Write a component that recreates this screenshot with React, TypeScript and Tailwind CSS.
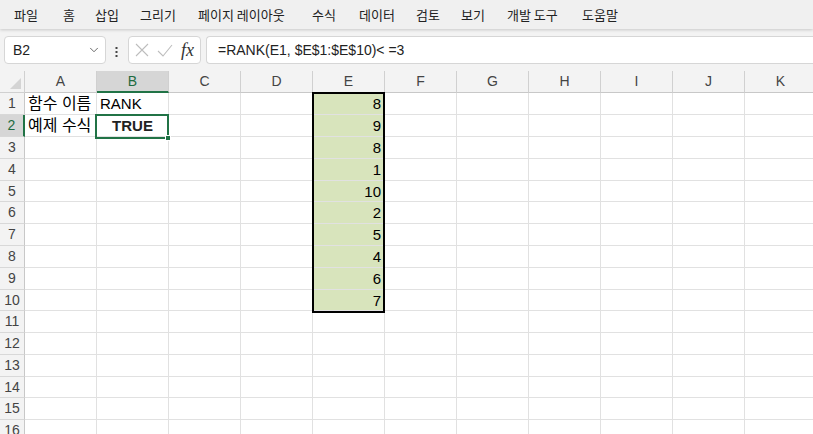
import { ChevronDown } from "lucide-react";

// tab starts taken from the ribbon: each tab box is a fixed width
const menus: [string, string][] = [
  ["파일", "w-[49px]"],
  ["홈", "w-[32px]"],
  ["삽입", "w-[45px]"],
  ["그리기", "w-[58px]"],
  ["페이지 레이아웃", "w-[114px]"],
  ["수식", "w-[47px]"],
  ["데이터", "w-[57px]"],
  ["검토", "w-[45px]"],
  ["보기", "w-[46px]"],
  ["개발 도구", "w-[75px]"],
  ["도움말", "w-[60px]"],
];
const cols = ["A", "B", "C", "D", "E", "F", "G", "H", "I", "J", "K"];

// Excel rows are ~21.7px, so mix 22 and 21
const rowHeights = [
  "h-[22px]", "h-[22px]", "h-[22px]", "h-[22px]", "h-[21px]",
  "h-[22px]", "h-[22px]", "h-[22px]", "h-[22px]", "h-[21px]",
  "h-[22px]", "h-[22px]", "h-[22px]", "h-[21px]", "h-[22px]", "h-[22px]",
];

const eValues = [8, 9, 8, 1, 10, 2, 5, 4, 6, 7];

const uiFont = "font-['Noto_Sans_CJK_KR','Noto_Sans',sans-serif]";
const cellFont = "font-['Liberation_Sans','Noto_Sans_CJK_KR',sans-serif]";

function Cell({ row, col }: { row: number; col: number }) {
  const base = `relative border-r border-b border-[#e1e1e1] overflow-visible whitespace-nowrap text-[15px] leading-none text-black flex items-center ${cellFont}`;
  const isE = col === 4 && row < 10;

  let content: React.ReactNode = null;
  if (col === 0 && row === 0) content = <span className="pl-[3px] text-[16px]">함수 이름</span>;
  if (col === 0 && row === 1) content = <span className="pl-[3px] text-[16px]">예제 수식</span>;
  if (col === 1 && row === 0) content = <span className="pl-[3px]">RANK</span>;
  if (col === 1 && row === 1) content = <span className="w-full text-center font-bold text-[#222]">TRUE</span>;
  if (isE) content = <span className="w-full pr-[3px] text-right">{eValues[row]}</span>;

  return (
    <div className={`${base} ${isE ? "bg-[#d8e4bc]" : "bg-white"}`}>
      {content}
      {col === 1 && row === 1 && (
        <div className="pointer-events-none absolute -left-[2px] -top-[1px] z-10 h-[25px] w-[74px] border-2 border-[#217346]">
          <div className="absolute -bottom-[4px] -right-[4px] h-[6px] w-[6px] border border-white bg-[#217346]" />
        </div>
      )}
    </div>
  );
}

export default function App() {
  return (
    <div className="h-[434px] w-[813px] overflow-hidden bg-[#f3f3f3]">
      {/* ribbon tabs */}
      <div className={`relative z-10 flex h-[29px] items-center bg-[#f0f0f0] pl-[14px] text-[13px] text-[#222] shadow-[0_1px_3px_rgba(0,0,0,0.18)] ${uiFont}`}>
        {menus.map(([m, w]) => (
          <span key={m} className={`${w} shrink-0 whitespace-nowrap`}>
            {m}
          </span>
        ))}
      </div>

      {/* formula bar */}
      <div className="flex h-[42px] items-center bg-[#f3f3f3] pl-[4px]">
        <div className="flex h-[28px] w-[102px] items-center justify-between rounded-[4px] border border-[#d6d6d6] bg-white pl-[8px] pr-[4px]">
          <span className="font-['Liberation_Sans',sans-serif] text-[14px] text-[#222]">B2</span>
          <ChevronDown size={14} strokeWidth={1.5} className="text-[#555]" />
        </div>
        <svg width="22" height="28" viewBox="0 0 22 28" className="shrink-0">
          <rect x="9.5" y="11" width="2" height="2" fill="#444" />
          <rect x="9.5" y="15" width="2" height="2" fill="#444" />
          <rect x="9.5" y="19" width="2" height="2" fill="#444" />
        </svg>
        <div className="flex h-[28px] w-[73px] items-center rounded-[4px] border border-[#d6d6d6] bg-white pl-[5px]">
          <svg width="16" height="16" viewBox="0 0 16 16" className="shrink-0">
            <path d="M2 2 L14 14 M14 2 L2 14" stroke="#bdbdbd" strokeWidth="1.1" fill="none" />
          </svg>
          <svg width="18" height="16" viewBox="0 0 18 16" className="ml-[6px] shrink-0">
            <path d="M2 9 L7 14 L16 3" stroke="#bdbdbd" strokeWidth="1.1" fill="none" />
          </svg>
          <span className="ml-[7px] font-['Liberation_Serif',serif] text-[18px] italic leading-none text-[#333]">fx</span>
        </div>
        <div className="ml-[5px] flex h-[28px] flex-1 items-center rounded-l-[4px] border border-r-0 border-[#d6d6d6] bg-white pl-[11px]">
          <span className="font-['Liberation_Sans',sans-serif] text-[14px] text-[#222]">=RANK(E1, $E$1:$E$10)&lt; =3</span>
        </div>
      </div>

      {/* sheet */}
      <div className="relative bg-white">
        <div className="grid grid-cols-[25px_repeat(11,72px)]">
          {/* corner */}
          <div className="relative h-[22px] border-r border-b border-[#d0d0d0] bg-[#f3f3f3]">
            <svg width="11" height="11" viewBox="0 0 11 11" className="absolute bottom-[3px] right-[3px]">
              <path d="M11 0 L11 11 L0 11 Z" fill="#d4d4d4" />
            </svg>
          </div>
          {cols.map((c, i) => (
            <div
              key={c}
              className={`flex h-[22px] items-center justify-center border-r border-[#d0d0d0] font-['Liberation_Sans',sans-serif] text-[14px] ${
                i === 1
                  ? "border-b-2 border-b-[#217346] bg-[#d6d6d6] text-[#1e6b40]"
                  : "border-b border-b-[#c8c8c8] bg-[#f3f3f3] text-[#444]"
              }`}
            >
              {c}
            </div>
          ))}

          {rowHeights.map((h, r) => (
            <div key={r} className="contents">
              <div
                className={`${h} flex items-center justify-center border-b border-[#d8d8d8] font-['Liberation_Sans',sans-serif] text-[14px] ${
                  r === 1
                    ? "border-r-2 border-r-[#217346] bg-[#d6d6d6] text-[#1e6b40]"
                    : "border-r border-r-[#c8c8c8] bg-[#f3f3f3] text-[#444]"
                }`}
              >
                {r + 1}
              </div>
              {cols.map((c, ci) => (
                <div key={c} className={`${h} contents`}>
                  <Cell row={r} col={ci} />
                </div>
              ))}
            </div>
          ))}
        </div>

        {/* thick outline around E1:E10 */}
        <div className="pointer-events-none absolute left-[312px] top-[21px] h-[221px] w-[73px] border-2 border-black" />
      </div>
    </div>
  );
}
